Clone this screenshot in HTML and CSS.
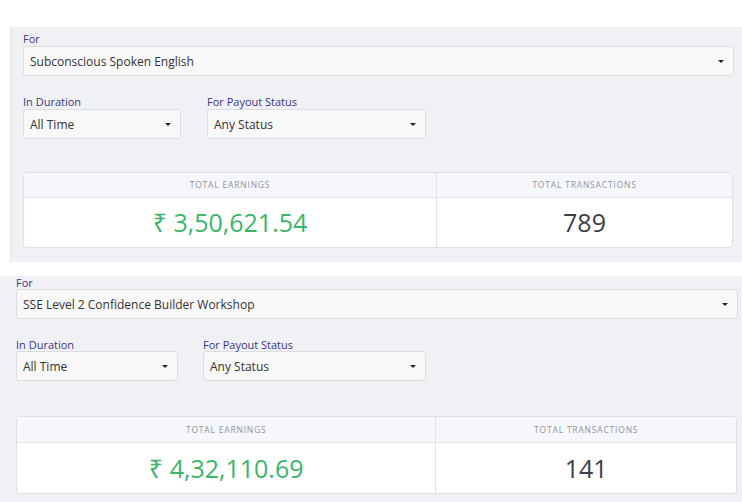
FILE: index.html
```html
<!DOCTYPE html>
<html lang="en">
<head>
    <meta charset="UTF-8">
    <meta name="viewport" content="width=device-width, initial-scale=1.0">
    <title>Earnings</title>
    <link rel="stylesheet" href="styles.css">
</head>
<body>
    <!-- First course -->
    <div class="panel panel-first">
        <div class="field">
            <label>For</label>
            <div class="select">
                <span>Subconscious Spoken English</span>
                <span class="caret"></span>
            </div>
        </div>

        <div class="filters">
            <div class="field duration">
                <label>In Duration</label>
                <div class="select">
                    <span>All Time</span>
                    <span class="caret"></span>
                </div>
            </div>
            <div class="field status">
                <label>For Payout Status</label>
                <div class="select">
                    <span>Any Status</span>
                    <span class="caret"></span>
                </div>
            </div>
        </div>

        <div class="stats">
            <div class="stat-head">Total Earnings</div>
            <div class="stat-head">Total Transactions</div>
            <div class="stat-value earnings">₹ 3,50,621.54</div>
            <div class="stat-value">789</div>
        </div>
    </div>

    <!-- Second course -->
    <div class="panel panel-second">
        <div class="field">
            <label>For</label>
            <div class="select">
                <span>SSE Level 2 Confidence Builder Workshop</span>
                <span class="caret"></span>
            </div>
        </div>

        <div class="filters">
            <div class="field duration">
                <label>In Duration</label>
                <div class="select">
                    <span>All Time</span>
                    <span class="caret"></span>
                </div>
            </div>
            <div class="field status">
                <label>For Payout Status</label>
                <div class="select">
                    <span>Any Status</span>
                    <span class="caret"></span>
                </div>
            </div>
        </div>

        <div class="stats">
            <div class="stat-head">Total Earnings</div>
            <div class="stat-head">Total Transactions</div>
            <div class="stat-value earnings">₹ 4,32,110.69</div>
            <div class="stat-value">141</div>
        </div>
    </div>
</body>
</html>
```

FILE: styles.css
```css
body {
    font-family: "Open Sans", "Noto Sans", sans-serif;
    margin: 0;
    padding-top: 27px;
    background: #fff;
    color: #333;
}
.panel {
    background: #f0f1f5;
}
.panel-first {
    margin-left: 10px;
    padding: 5px 8px 14px 12px;
    border-left: 1px solid #e6e7ed;
}
.panel-second {
    margin-top: 14px;
    padding: 0 4px 9px 16px;
}
label {
    display: block;
    font-size: 11px;
    line-height: 14px;
    color: #3b3680;
}
.panel-second label {
    line-height: 13px;
}
.select {
    display: flex;
    align-items: center;
    justify-content: space-between;
    height: 28px;
    padding: 0 9px 0 6px;
    background: #f8f8f8;
    border: 1px solid #dcdde2;
    border-radius: 3px;
    font-size: 12px;
    color: #333;
}
.caret {
    width: 0;
    height: 0;
    border-left: 3px solid transparent;
    border-right: 3px solid transparent;
    border-top: 3px solid #222;
}
.filters {
    display: flex;
    gap: 26px;
    margin-top: 19px;
}
.panel-first .duration {
    width: 158px;
}
.panel-first .status {
    width: 219px;
}
.panel-second .filters {
    gap: 25px;
}
.panel-second .duration {
    width: 162px;
}
.panel-second .status {
    width: 223px;
}
.stats {
    display: grid;
    grid-template-columns: 7fr 5fr;
    margin-top: 33px;
    margin-right: 1px;
    background: #fff;
    border: 1px solid #dfe1e8;
    border-radius: 4px;
    overflow: hidden;
}
.panel-second .stats {
    margin-top: 35px;
}
.stat-head {
    height: 24px;
    line-height: 24px;
    text-align: center;
    background: #f6f7fb;
    border-bottom: 1px solid #dfe1e8;
    font-size: 8.5px;
    letter-spacing: 0.8px;
    text-transform: uppercase;
    color: #90939b;
}
.stat-value {
    height: 49px;
    line-height: 49px;
    text-align: center;
    font-size: 25px;
    color: #3a3f48;
}
.panel-second .stat-head {
    height: 25px;
    line-height: 25px;
}
.panel-second .stat-value {
    height: 50px;
    line-height: 50px;
}
.stat-head:first-child,
.stat-value.earnings {
    border-right: 1px solid #dfe1e8;
}
.earnings {
    color: #3bb56b;
}
```
